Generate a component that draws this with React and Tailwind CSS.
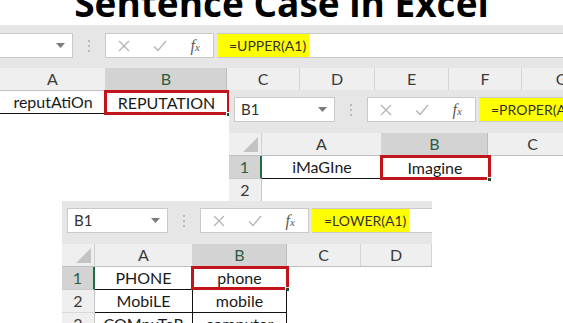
import React from 'react';

// three overlapping Excel screenshots
const windows = [
  {
    id: 'upper',
    pos: 'left-[-33px] top-[25px] w-[600px] h-[298px]',
    name: 'B1',
    formula: '=UPPER(A1)',
    cols: [
      { label: 'A', w: 'w-[106px]' },
      { label: 'B', w: 'w-[121px]', sel: true },
      { label: 'C', w: 'w-[73px]' },
      { label: 'D', w: 'w-[75px]' },
      { label: 'E', w: 'w-[74px]' },
      { label: 'F', w: 'w-[73px]' },
      { label: 'G', w: 'w-[80px]' },
    ],
    rows: [['reputAtiOn', 'REPUTATION']],
    grid: false,
    top: 'pt-[8px]',
    gap: 'mt-[10px]',
  },
  {
    id: 'proper',
    pos: 'left-[229px] top-[90px] w-[340px] h-[111px]',
    name: 'B1',
    formula: '=PROPER(A1)',
    cols: [
      { label: 'A', w: 'w-[120px]' },
      { label: 'B', w: 'w-[106px]', sel: true },
      { label: 'C', w: 'w-[90px]' },
    ],
    rows: [['iMaGIne', 'Imagine'], ['', '']],
    grid: false,
    top: 'pt-[7px]',
    gap: 'mt-[11px]',
  },
  {
    id: 'lower',
    pos: 'left-[62px] top-[201px] w-[370px] h-[140px]',
    name: 'B1',
    formula: '=LOWER(A1)',
    cols: [
      { label: 'A', w: 'w-[98px]' },
      { label: 'B', w: 'w-[94px]', sel: true },
      { label: 'C', w: 'w-[74px]' },
      { label: 'D', w: 'w-[71px]' },
    ],
    rows: [['PHONE', 'phone'], ['MobiLE', 'mobile'], ['COMpuTeR', 'computer']],
    grid: true,
    top: 'pt-[7px]',
    gap: 'mt-[11px]',
  },
];

function FormulaBar({ name, formula }) {
  return (
    <div className="flex h-[25px] pl-[5px]">
      <div className="w-[101px] shrink-0 bg-white border border-[#c9c9c9] flex items-center justify-between pl-[6px] pr-[7px] text-[15px] text-[#333]">
        <span>{name}</span>
        <svg width="9" height="5" viewBox="0 0 9 5">
          <path d="M0 0h9L4.5 5z" fill="#7b7b7b" />
        </svg>
      </div>
      <div className="w-[32px] shrink-0 flex flex-col items-center justify-center gap-[3px]">
        <span className="w-[2px] h-[2px] bg-[#b9b9b9]" />
        <span className="w-[2px] h-[2px] bg-[#b9b9b9]" />
        <span className="w-[2px] h-[2px] bg-[#b9b9b9]" />
      </div>
      <div className="w-[109px] shrink-0 bg-white border border-[#c9c9c9] flex items-center">
        <div className="w-[37px] flex justify-center">
          <svg width="12" height="12" viewBox="0 0 12 12">
            <path d="M1 1l10 10M11 1L1 11" stroke="#b4b4b4" strokeWidth="1.3" />
          </svg>
        </div>
        <div className="w-[37px] flex justify-center">
          <svg width="14" height="12" viewBox="0 0 14 12">
            <path d="M1 6.5l4 4L13 1" fill="none" stroke="#b4b4b4" strokeWidth="1.3" />
          </svg>
        </div>
        <div className="w-[37px] flex justify-center">
          <span className="italic font-['Liberation_Serif',serif] text-[16px] text-[#5a5a5a] leading-none">
            f<span className="text-[11px]">x</span>
          </span>
        </div>
      </div>
      <div className="flex-1 ml-[3px] bg-white border-y border-[#c9c9c9] flex">
        <span className="bg-[#ffff00] flex items-center pl-[12px] pr-[3px] text-[14px] text-[#333]">
          {formula}
        </span>
      </div>
    </div>
  );
}

function Corner() {
  return (
    <div className="w-[33px] shrink-0 h-full bg-[#efefef] border-r border-[#cfcfcf] flex items-end justify-end pr-[3px] pb-[3px]">
      <svg width="15" height="15" viewBox="0 0 15 15">
        <path d="M15 0v15H0z" fill="#c3c3c3" />
      </svg>
    </div>
  );
}

function Window({ win }) {
  return (
    <div className={`absolute ${win.pos} bg-white overflow-hidden`}>
      <div className={`bg-[#e6e6e6] ${win.top}`}>
        <FormulaBar name={win.name} formula={win.formula} />
        <div className={`${win.gap} flex h-[23px] border-b border-[#bfbfbf]`}>
          <Corner />
          {win.cols.map((c) => (
            <div
              key={c.label}
              className={`${c.w} shrink-0 flex items-center justify-center text-[16px] border-r ${
                c.sel ? 'bg-[#d3d3d3] text-[#2e5b43] border-[#bdbdbd]' : 'bg-[#efefef] text-[#3a3a3a] border-[#d4d4d4]'
              }`}
            >
              {c.label}
            </div>
          ))}
        </div>
      </div>
      {win.rows.map((r, i) => (
        <div key={i} className="flex h-[23px]">
          <div
            className={`w-[33px] shrink-0 flex items-center justify-center text-[16px] border-b ${
              i === 0
                ? 'bg-[#d3d3d3] text-[#2e5b43] border-[#c9c9c9] border-r-2 border-r-[#1f6e43]'
                : 'bg-[#efefef] text-[#3a3a3a] border-[#d8d8d8] border-r border-r-[#c9c9c9]'
            }`}
          >
            {i + 1}
          </div>
          {win.cols.map((c, j) => {
            const filled = j < 2;
            let border = '';
            if (win.grid && filled) border = 'border-r border-b border-[#111]';
            else if (!win.grid && j === 0 && r[0]) border = 'border-b border-[#111]';
            return (
              <div
                key={c.label}
                className={`${c.w} shrink-0 relative flex items-center justify-center text-[16px] text-[#1a1a1a] ${border}`}
              >
                {filled ? r[j] : ''}
                {i === 0 && j === 1 && (
                  <>
                    <span className="absolute left-[-2px] top-[-1px] right-[-3px] bottom-[-1px] border-[3px] border-[#c1141b]" />
                    <span className="absolute right-[-4px] bottom-[-3px] w-[5px] h-[5px] bg-[#1d4d30] border border-white" />
                  </>
                )}
              </div>
            );
          })}
        </div>
      ))}
    </div>
  );
}

export default function App() {
  return (
    <div className="relative w-[563px] h-[323px] overflow-hidden bg-white font-['Lato',sans-serif]">
      <h1 className="-mt-[16px] text-center font-['Open_Sans',sans-serif] font-bold text-[37px] leading-none text-black">
        Sentence Case in Excel
      </h1>
      {windows.map((w) => (
        <Window key={w.id} win={w} />
      ))}
    </div>
  );
}
